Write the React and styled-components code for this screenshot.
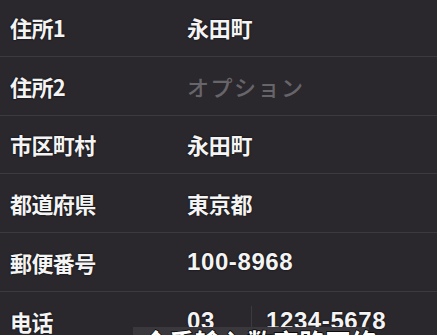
import React from "react";
import styled, { createGlobalStyle } from "styled-components";

const GlobalStyle = createGlobalStyle`
  html, body {
    margin: 0;
    padding: 0;
    background: #2a282d;
    overflow: hidden;
  }
`;

const Screen = styled.div`
  position: relative;
  width: 437px;
  height: 335px;
  overflow: hidden;
  background: #2a282d;
  font-family: "Noto Sans CJK JP", "Noto Sans", sans-serif;
`;

const List = styled.div`
  display: flex;
  flex-direction: column;
  margin-top: -2px;
`;

const Row = styled.div`
  display: grid;
  grid-template-columns: 177px 1fr;
  align-items: center;
  height: 58.8px;
  padding-left: 10px;
  border-bottom: 1.5px solid #3b3a3f;
  box-sizing: border-box;
`;

const Label = styled.div`
  color: #f4f4f4;
  font-size: 22px;
  font-weight: 700;
  letter-spacing: -0.6px;
  text-shadow: 0 0 2px #000;
`;

const Value = styled.div`
  color: ${(p) => (p.$placeholder ? "#67656a" : "#f4f4f4")};
  font-size: 22px;
  font-weight: ${(p) => (p.$placeholder ? 500 : 700)};
  letter-spacing: ${(p) => (p.$placeholder ? "1.5px" : "-0.3px")};
  text-shadow: ${(p) => (p.$placeholder ? "none" : "0 0 2px #000")};
`;

const Number = styled(Value)`
  font-family: "Liberation Sans", "Noto Sans", sans-serif;
  font-size: 24px;
  letter-spacing: 0.6px;
`;

const Phone = styled.div`
  display: flex;
  align-items: center;
  height: 100%;
`;

const Area = styled(Number)`
  width: 64px;
  align-self: stretch;
  display: flex;
  align-items: center;
  border-right: 1.5px solid #3b3a3f;
  margin-top: 14px;
  padding-bottom: 14px;
`;

const Local = styled(Number)`
  padding-left: 14px;
`;

const Subtitle = styled.div`
  position: absolute;
  left: 133px;
  top: 327px;
  width: 236px;
  height: 40px;
  background: #3a383c;
  color: #fff;
  font-size: 26px;
  font-weight: 700;
  line-height: 30px;
  padding: 0 0 0 10px;
  box-sizing: border-box;
  white-space: nowrap;
  -webkit-text-stroke: 1.5px #000;
  paint-order: stroke fill;
  font-family: "Noto Sans CJK SC", sans-serif;
`;

const rows = [
  { label: "住所1", value: "永田町" },
  { label: "住所2", value: "オプション", placeholder: true },
  { label: "市区町村", value: "永田町" },
  { label: "都道府県", value: "東京都" },
  { label: "郵便番号", value: "100-8968", number: true },
];

export default function App() {
  return (
    <Screen>
      <GlobalStyle />
      <List>
        {rows.map((r) => (
          <Row key={r.label}>
            <Label>{r.label}</Label>
            {r.number ? (
              <Number>{r.value}</Number>
            ) : (
              <Value $placeholder={r.placeholder}>{r.value}</Value>
            )}
          </Row>
        ))}
        <Row>
          <Label>电话</Label>
          <Phone>
            <Area>03</Area>
            <Local>1234-5678</Local>
          </Phone>
        </Row>
      </List>
      <Subtitle>全手输入数字路网络</Subtitle>
    </Screen>
  );
}
